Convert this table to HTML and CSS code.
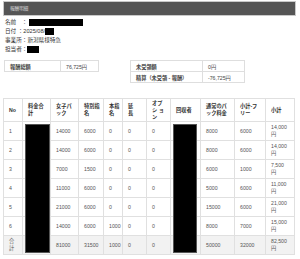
FILE: index.html
```html
<!DOCTYPE html>
<html lang="ja">
<head>
<meta charset="utf-8">
<link rel="stylesheet" href="styles.css">
</head>
<body>
<div class="page">
  <div class="titlebar">報酬明細</div>
  <div class="info">
    <div class="line">名前　：<span class="redact r-name"></span></div>
    <div class="line">日付 ：2025/08/<span class="redact r-day"></span></div>
    <div class="line">事業所：新潟県様特急</div>
    <div class="line">担当者：<span class="redact r-staff"></span></div>
  </div>
  <div class="summary">
    <table class="sum sum-left">
      <tr><th class="c1">報酬総額</th><td class="c2">76,725円</td></tr>
    </table>
    <table class="sum sum-right">
      <tr><th class="c3">未受領額</th><td class="c4">0円</td></tr>
      <tr><th class="c3">精算（未受領 - 報酬）</th><td class="c4">-76,725円</td></tr>
    </table>
  </div>
  <div class="table-wrap">
    <table class="detail">
      <colgroup>
        <col class="w-no"><col class="w-total"><col class="w-girl"><col class="w-special"><col class="w-main"><col class="w-ext"><col class="w-opt"><col class="w-coll"><col class="w-normal"><col class="w-free"><col class="w-sub">
      </colgroup>
      <thead>
        <tr><th>No</th><th>料金合<br>計</th><th>女子パ<br>ック</th><th>特別指<br>名</th><th>本指<br>名</th><th>延<br>長</th><th>オプ<br>シ ョ<br>ン</th><th>回収者</th><th>通常のパ<br>ック料金</th><th>小計-フ<br>リー</th><th>小計</th></tr>
      </thead>
      <tbody>
        <tr><td>1</td><td></td><td>14000</td><td>6000</td><td>0</td><td>0</td><td>0</td><td></td><td>8000</td><td>6000</td><td>14,000<br>円</td></tr>
        <tr><td>2</td><td></td><td>14000</td><td>6000</td><td>0</td><td>0</td><td>0</td><td></td><td>8000</td><td>6000</td><td>14,000<br>円</td></tr>
        <tr><td>3</td><td></td><td>7000</td><td>1500</td><td>0</td><td>0</td><td>0</td><td></td><td>6000</td><td>1000</td><td>7,500<br>円</td></tr>
        <tr><td>4</td><td></td><td>11000</td><td>6000</td><td>0</td><td>0</td><td>0</td><td></td><td>5000</td><td>6000</td><td>11,000<br>円</td></tr>
        <tr><td>5</td><td></td><td>21000</td><td>6000</td><td>0</td><td>0</td><td>0</td><td></td><td>15000</td><td>6000</td><td>21,000<br>円</td></tr>
        <tr><td>6</td><td></td><td>14000</td><td>6000</td><td>1000</td><td>0</td><td>0</td><td></td><td>8000</td><td>7000</td><td>15,000<br>円</td></tr>
        <tr class="total"><td>合<br>計</td><td></td><td>81000</td><td>31500</td><td>1000</td><td>0</td><td>0</td><td></td><td>50000</td><td>32000</td><td>82,500<br>円</td></tr>
      </tbody>
    </table>
    <div class="mask mask-total"></div>
    <div class="mask mask-coll"></div>
  </div>
</div>
</body>
</html>
```
FILE: styles.css
```css
* { box-sizing: border-box; }
html, body { margin: 0; padding: 0; background: #fff; }
body {
  font-family: "Liberation Sans", "Noto Sans CJK JP", sans-serif;
  color: #333;
}
.page { width: 300px; padding: 1px 4px 0 3px; }

.titlebar {
  height: 15px;
  background: #555;
  border: 1px solid #c9c9c9;
  color: #d8d8d8;
  font-size: 4.6px;
  line-height: 13px;
  padding-left: 6px;
}

.info { padding: 2px 0 0 2px; font-size: 5.6px; line-height: 9px; color: #333; }
.line { height: 9px; white-space: nowrap; }
.redact { display: inline-block; background: #000; height: 7px; vertical-align: -1.5px; }
.r-name { width: 54px; margin-left: 2px; }
.r-day { width: 9px; }
.r-staff { width: 12px; }

.summary { display: flex; gap: 31px; margin-top: 6px; padding-left: 1px; align-items: flex-start; }
.sum { border-collapse: collapse; font-size: 5.2px; table-layout: fixed; }
.sum th, .sum td {
  border: 1px solid #dedede;
  height: 11px;
  padding: 0 0 0 5px;
  text-align: left;
  white-space: nowrap;
  vertical-align: middle;
}
.sum th { font-weight: bold; color: #444; }
.sum td { color: #444; }
.c1 { width: 56px; }
.c2 { width: 38px; }
.c3 { width: 72px; }
.c4 { width: 42px; }

.table-wrap { position: relative; margin-top: 15px; width: 291px; }
.detail { border-collapse: collapse; table-layout: fixed; width: 291px; font-size: 5.2px; }
.detail th, .detail td {
  border: 1px solid #e0e0e0;
  padding: 0 2px 0 5px;
  text-align: left;
  vertical-align: middle;
  line-height: 7px;
}
.detail th { height: 23px; font-weight: bold; color: #333; }
.detail td { height: 19px; color: #555; }
.detail .total td { background: #f2f2f2; }

.w-no { width: 19px; }
.w-total { width: 28px; }
.w-girl { width: 28px; }
.w-special { width: 25px; }
.w-main { width: 19px; }
.w-ext { width: 24px; }
.w-opt { width: 24px; }
.w-coll { width: 30px; }
.w-normal { width: 34px; }
.w-free { width: 31px; }
.w-sub { width: 29px; }

.mask { position: absolute; top: 26px; height: 129px; background: #000; border: 1px solid #555; }
.mask-total { left: 22px; width: 25px; }
.mask-coll { left: 170px; width: 24px; }
```
